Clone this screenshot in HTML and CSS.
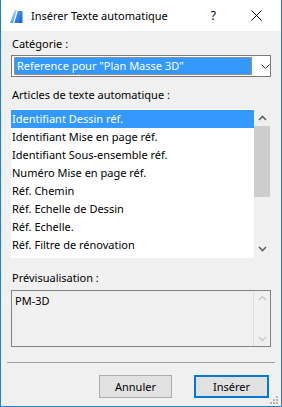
FILE: index.html
```html
<!DOCTYPE html>
<html lang="fr">
<head>
  <meta charset="UTF-8" />
  <title>Insérer Texte automatique</title>
  <link rel="stylesheet" href="styles.css">
</head>
<body>

  <div class="window">

    <div class="titlebar">
      <svg class="app-icon" width="13" height="14" viewBox="0 0 13 14">
        <defs>
          <linearGradient id="g1" x1="0" y1="0" x2="0.4" y2="1">
            <stop offset="0" stop-color="#d6ecff"/>
            <stop offset="1" stop-color="#4f9de8"/>
          </linearGradient>
          <linearGradient id="g2" x1="0" y1="0" x2="1" y2="1">
            <stop offset="0" stop-color="#5aa8f0"/>
            <stop offset="1" stop-color="#1460c8"/>
          </linearGradient>
        </defs>
        <polygon points="0,14 4.5,1 7,1 3,14" fill="url(#g1)"/>
        <polygon points="4.2,14 7.8,2 12.5,2 12.5,14" fill="url(#g2)"/>
      </svg>
      <span class="title">Insérer Texte automatique</span>
      <span class="help">?</span>
      <svg class="close" width="11" height="11" viewBox="0 0 11 11">
        <path d="M0.5 0.5 L10.5 10.5 M10.5 0.5 L0.5 10.5" stroke="#000" stroke-width="1"/>
      </svg>
    </div>

    <div class="content">

      <div class="label first">Catégorie :</div>
      <div class="combo">
        <div class="combo-value">Reference pour "Plan Masse 3D"</div>
        <svg class="chev" width="9" height="5" viewBox="0 0 9 5">
          <path d="M0.5 0.5 L4.5 4.5 L8.5 0.5" stroke="#333" fill="none"/>
        </svg>
      </div>

      <div class="label">Articles de texte automatique :</div>
      <div class="list">
        <div class="rows">
          <div class="row selected">Identifiant Dessin réf.</div>
          <div class="row">Identifiant Mise en page réf.</div>
          <div class="row">Identifiant Sous-ensemble réf.</div>
          <div class="row">Numéro Mise en page réf.</div>
          <div class="row">Réf. Chemin</div>
          <div class="row">Réf. Echelle de Dessin</div>
          <div class="row">Réf. Echelle.</div>
          <div class="row">Réf. Filtre de rénovation</div>
        </div>
        <div class="scrollbar">
          <svg class="arrow" width="9" height="6" viewBox="0 0 9 6">
            <path d="M1 5 L4.5 1.5 L8 5" stroke="#606060" stroke-width="1.6" fill="none"/>
          </svg>
          <div class="track">
            <div class="thumb"></div>
          </div>
          <svg class="arrow" width="9" height="6" viewBox="0 0 9 6">
            <path d="M1 1 L4.5 4.5 L8 1" stroke="#606060" stroke-width="1.6" fill="none"/>
          </svg>
        </div>
      </div>

      <div class="label preview-label">Prévisualisation :</div>
      <div class="preview">
        <div class="preview-text">PM-3D</div>
        <div class="scrollbar disabled">
          <svg class="arrow" width="9" height="6" viewBox="0 0 9 6">
            <path d="M1 5 L4.5 1.5 L8 5" stroke="#c8c8c8" stroke-width="1.4" fill="none"/>
          </svg>
          <svg class="arrow" width="9" height="6" viewBox="0 0 9 6">
            <path d="M1 1 L4.5 4.5 L8 1" stroke="#c8c8c8" stroke-width="1.4" fill="none"/>
          </svg>
        </div>
      </div>

    </div>

    <div class="separator"></div>

    <div class="buttons">
      <button class="btn">Annuler</button>
      <button class="btn default">Insérer</button>
    </div>

    <div class="grip">
      <svg width="9" height="9" viewBox="0 0 9 9">
        <rect x="6" y="0" width="2" height="2" fill="#b4b4b4"/>
        <rect x="3" y="3" width="2" height="2" fill="#b4b4b4"/>
        <rect x="6" y="3" width="2" height="2" fill="#b4b4b4"/>
        <rect x="0" y="6" width="2" height="2" fill="#b4b4b4"/>
        <rect x="3" y="6" width="2" height="2" fill="#b4b4b4"/>
        <rect x="6" y="6" width="2" height="2" fill="#b4b4b4"/>
      </svg>
    </div>

  </div>

</body>
</html>
```

FILE: styles.css
```css
* {
  margin: 0;
  padding: 0;
  box-sizing: border-box;
}

body {
  font-family: 'Segoe UI', 'Noto Sans', sans-serif;
  font-size: 11px;
  color: #000;
  background: #fff;
}

.window {
  position: relative;
  width: 282px;
  height: 407px;
  background-color: #f0f0f0;
  border: 1px solid #1883d7;
  border-top: none;
  overflow: hidden;
}

.titlebar {
  height: 31px;
  background-color: #fff;
  display: flex;
  align-items: center;
  padding-left: 9px;
}

.app-icon {
  margin-right: 8px;
}

.title {
  font-size: 11px;
  flex: 1;
}

.help {
  font-size: 12px;
  margin-right: 35px;
}

.close {
  margin-right: 19px;
}

.content {
  padding: 5px 10px 0 10px;
}

.label {
  height: 16px;
  line-height: 16px;
  padding-left: 1px;
  margin-top: 10px;
}

.label.first {
  margin-top: 0;
}

.label.preview-label {
  margin-top: 12px;
}

.combo {
  margin-top: 3px;
  height: 22px;
  border: 1px solid #7a7a7a;
  background: #fff;
  display: flex;
  align-items: center;
  padding: 1px 0 1px 2px;
}

.combo-value {
  width: 238px;
  height: 18px;
  line-height: 16px;
  background-color: #3399ff;
  color: #fff;
  border: 1px dotted #e08a2c;
  padding-left: 2px;
}

.chev {
  margin-left: 9px;
}

.list {
  margin-top: 6px;
  height: 149px;
  display: flex;
}

.rows {
  width: 243px;
  background: #fff;
  padding-top: 1px;
}

.row {
  height: 18px;
  line-height: 18px;
  padding-left: 1px;
  white-space: nowrap;
}

.row.selected {
  background-color: #3399ff;
  color: #fff;
}

.scrollbar {
  width: 17px;
  display: flex;
  flex-direction: column;
  align-items: center;
  background-color: #f0f0f0;
}

.scrollbar .arrow {
  margin: 6px 0;
}

.track {
  flex: 1;
  width: 100%;
}

.thumb {
  margin: -1px 1px 0 0;
  height: 71px;
  background-color: #cdcdcd;
}

.preview {
  margin-top: 4px;
  height: 57px;
  border: 1px solid #828282;
  display: flex;
}

.preview-text {
  flex: 1;
  padding: 2px 0 0 3px;
  line-height: 16px;
}

.preview .scrollbar {
  border-left: 1px solid #dcdcdc;
  justify-content: space-between;
  padding: 1px 0;
}

.preview .scrollbar .arrow {
  margin: 3px 0;
}

.separator {
  margin: 15px 6px 0 6px;
  border-top: 1px solid #a0a0a0;
}

.buttons {
  display: flex;
  justify-content: flex-end;
  gap: 22px;
  padding: 12px 12px 0 0;
}

.btn {
  font-family: 'Segoe UI', 'Noto Sans', sans-serif;
  font-size: 11px;
  width: 73px;
  height: 23px;
  background-color: #e1e1e1;
  border: 1px solid #adadad;
  color: #000;
}

.btn.default {
  width: 75px;
  border: 2px solid #0078d7;
}

.grip {
  position: absolute;
  right: 2px;
  bottom: 1px;
  line-height: 0;
}
```
